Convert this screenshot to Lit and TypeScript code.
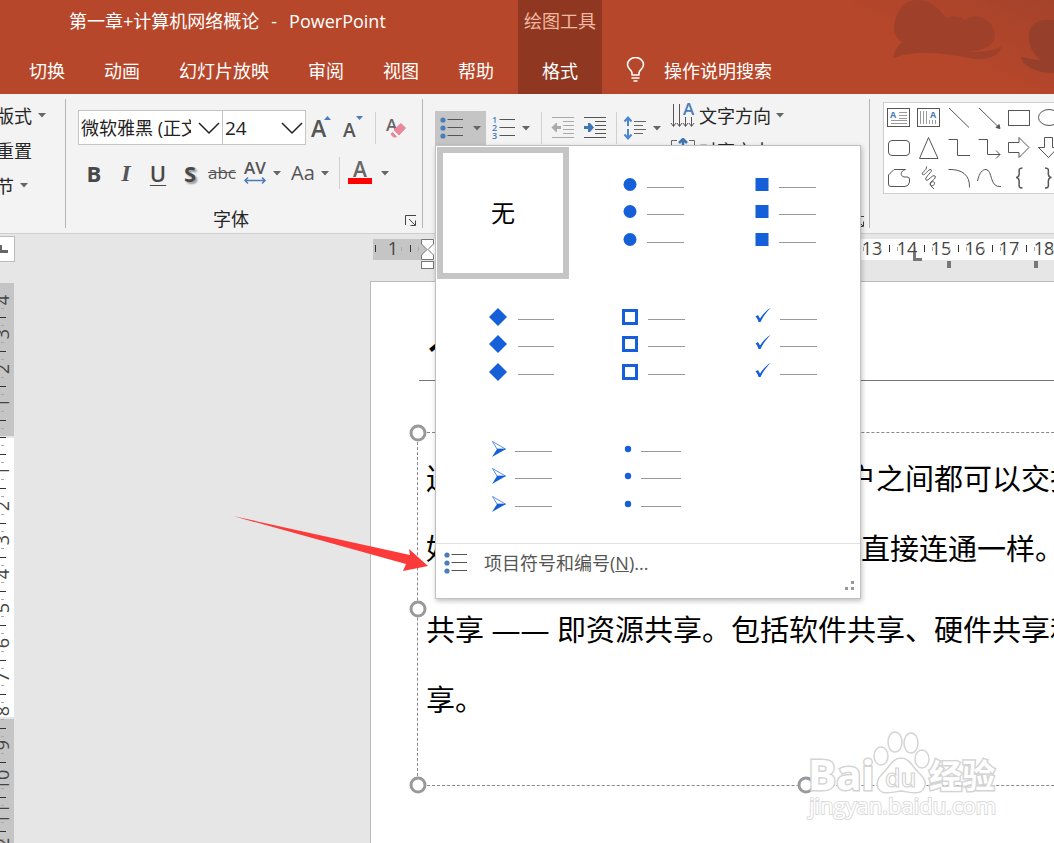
import { LitElement, html, svg, css } from "lit";
import { customElement, state } from "lit/decorators.js";

const caret = html`<svg class="caret" width="8" height="5" viewBox="0 0 8 5"><path d="M0 0H8L4 4.5Z" fill="#666"/></svg>`;
const chevron = html`<svg class="chevron" width="22" height="14" viewBox="0 0 22 14"><path d="M1 2L11 12L21 2" fill="none" stroke="#222" stroke-width="1.5"/></svg>`;
const launcher = html`<svg width="12" height="12" viewBox="0 0 12 12" fill="none" stroke="#444"><path d="M.5 10V.5H11M4 4L10 10M10.5 5.500V10.500H5.500"/></svg>`;

const listIcon = html`<svg width="24" height="24" viewBox="0 0 24 24">
  ${[4, 12, 20].map((y) => svg`<circle cx="3" cy=${y} r="2.6" fill="#4a7db8"/><path d=${`M7.500 ${y - 0.5}H23`} stroke="#555"/>`)}
</svg>`;

const numberIcon = html`<svg width="24" height="26" viewBox="0 0 24 26">
  ${[1, 2, 3].map((n) => svg`<text x="0" y=${n * 8} font-size="9" font-weight="600" fill="#4a7db8">${n}</text><path d=${`M7.500 ${n * 8 - 3.5}H23`} stroke="#555"/>`)}
</svg>`;

const indentIcon = (active: boolean) => html`<svg width="24" height="24" viewBox="0 0 24 24" fill="none" stroke=${active ? "#555" : "#aaa"}>
  <path d="M1 1.500H23M12 5.500H23M12 9.500H23M12 13.500H23M12 17.500H23M1 21.500H23"/>
  ${active
    ? svg`<path d="M1 10H5V7H7L11 11.500L7 16H5V13H1Z" fill="#3f76b5" stroke="none"/>`
    : svg`<path d="M10 10H6V7H5L0.500 11.500L5 16H6V13H10Z" fill="#aaa" stroke="none"/>`}
</svg>`;

const spacingIcon = html`<svg width="24" height="24" viewBox="0 0 24 24" fill="none">
  <path d="M5 2V10M1.500 5.500L5 1.500L8.500 5.500M5 13V22M1.500 18.500L5 22.500L8.500 18.500" stroke="#4a86cf" stroke-width="2"/>
  <path d="M11 5.500H23M11 9.500H20M11 13.500H23M11 17.500H20" stroke="#666"/>
</svg>`;

const directionIcon = html`<svg width="26" height="26" viewBox="0 0 26 26" fill="none" stroke="#555">
  <path d="M3.500 1V23M9.500 1V23M15.500 14V23M21.500 14V23"/>
  <path d="M1 20L3.500 23.500L6 20M7 20L9.500 23.500L12 20M13 20L15.500 23.500L18 20M19 20L21.500 23.500L24 20"/>
  <text x="13" y="12" font-size="17" font-weight="600" fill="#4a7db8" stroke="none">A</text>
</svg>`;

const alignIcon = html`<svg width="26" height="26" viewBox="0 0 26 26" fill="none">
  <path d="M7 2.500H1.500V23.500H24.500V2.500H19" stroke="#666"/>
  <path d="M13 1V10M9 5L13 1L17 5" stroke="#3f76b5" stroke-width="2.500"/>
  <path d="M6 14.500H20M6 18.500H20" stroke="#666"/>
</svg>`;

const shapes: [string, unknown][] = [
  ["文本框", svg`<rect x="3.500" y="5.500" width="22" height="18"/><path d="M15 9.500H23M15 12.500H23M15 15.500H23M7 17.500H23M7 20.500H23" stroke="#999"/><text x="6" y="15" font-size="9" font-weight="700" fill="#4a7db8" stroke="none">A</text>`],
  ["竖排文本框", svg`<rect x="3.500" y="5.500" width="22" height="18"/><path d="M6.500 8V21M9.500 8V21M12.500 8V21M15.500 17V21M18.500 17V21M21.500 17V21" stroke="#999"/><text x="16" y="15" font-size="9" font-weight="700" fill="#4a7db8" stroke="none">A</text>`],
  ["直线", svg`<path d="M5 5L25 24.500"/>`],
  ["箭头", svg`<path d="M5 5L25 24.500"/><path d="M26 25.500L22 24.500L25 21.500Z" fill="#555"/>`],
  ["矩形", svg`<rect x="4.500" y="7.500" width="21" height="15"/>`],
  ["椭圆", svg`<ellipse cx="15" cy="14.500" rx="10.500" ry="8"/>`],
  ["圆角矩形", svg`<rect x="4.500" y="7.500" width="21" height="15" rx="3.500"/>`],
  ["三角形", svg`<path d="M14.500 4.500L24 25.500H5.500Z"/>`],
  ["肘形连接符", svg`<path d="M4.500 6.500H13.500V22.500H26"/>`],
  ["肘形箭头", svg`<path d="M4.500 6.500H13.500V21.500H26M22 17.500L26 21.500L22 25.500"/>`],
  ["右箭头", svg`<path d="M4.500 9.500H15V4.500L25 14.500L15 24.500V19.500H4.500Z"/>`],
  ["下箭头", svg`<path d="M10.500 4.500H18.500V14.500H24L14.500 24.500L4.500 14.500H10.500Z"/>`],
  ["任意多边形", svg`<path d="M4.500 12L10 6.500H21.500C16 8 16 13 20 14H23Q25.500 14 25.500 16V19Q25 23 21 23.500H7Q4.500 23.500 4.500 21Z"/>`],
  ["自由曲线", svg`<path d="M12.500 3.500C13 8 7 9 8.500 11.500C11 13 14 6 17 6.500C20 8 10 14 12 17C14 19 18 11 21 13C23 16 16 18 16 21C17 24 21 23 20.500 19.500C18 17 15 21 17 23L20 26"/>`],
  ["弧形", svg`<path d="M4.500 6.500C18 6 26 12 25.500 24.500"/>`],
  ["曲线", svg`<path d="M3.500 18C5 10 9 6 12 6.500C19 7 15 25 27 23.500"/>`],
  ["左大括号", svg`<path d="M18.500 5C13 5 16 9 15 12Q14.500 14.500 12 14.500Q14.500 14.500 15 17C16 21 13 25 18.500 25" stroke-width="1.500"/>`],
  ["右大括号", svg`<path d="M11 5C16.500 5 13.500 9 14.500 12Q15 14.500 17.500 14.500Q15 14.500 14.500 17C13.500 21 16.500 25 11 25" stroke-width="1.500"/>`],
];

interface Bullet {
  name: string;
  glyph: unknown;
  from: number;
  to: number;
}

/* Each glyph is drawn around y = 0 and repeated on three rows. */
const bullets: Bullet[] = [
  { name: "实心圆", glyph: svg`<circle cx="61" cy="-.5" r="6.500"/>`, from: 78, to: 115 },
  { name: "实心方块", glyph: svg`<rect x="54.500" y="-7" width="13" height="13"/>`, from: 78, to: 115 },
  { name: "菱形", glyph: svg`<path d="M61 -9L70 0L61 9L52 0Z"/>`, from: 81, to: 117 },
  { name: "空心方块", glyph: svg`<path d="M53 -8H69V8H53ZM56 -5V5H66V-5Z" fill-rule="evenodd"/>`, from: 79, to: 116 },
  { name: "对勾", glyph: svg`<path d="M54.500 -.5L57 -2L59 1.500C62 -3 65 -6.500 69.500 -9C65 -4.500 61.500 .5 59.500 5H57.500C57 3 56 1 54.500 -.5Z"/>`, from: 79, to: 116 },
  { name: "箭头", glyph: svg`<path d="M55.500 -7.500L68.500 0H60Z" fill="none" stroke="#1560d8" stroke-width=".7"/><path d="M60 0H69L55 8Z"/>`, from: 78, to: 115 },
  { name: "圆点", glyph: svg`<circle cx="59" cy="0" r="3.200"/>`, from: 72, to: 112 },
];

/* One centimetre of the slide at the current zoom. */
const UNIT = 34.25;

@customElement("horizontal-ruler")
class HorizontalRuler extends LitElement {
  static styles = css`
    :host { display: block; height: 30px; overflow: hidden; }
    svg { display: block; width: 100%; height: 30px; font: 18px "Open Sans", sans-serif; }
  `;
  render() {
    const zero = 54;
    const marks = Array.from({ length: 35 }, (_, i) => i - 1);
    return html`<svg>
      <rect width="100%" height="21" fill="#fff"/>
      <rect width=${zero} height="21" fill="#c5c5c5"/>
      ${marks.map((n) => {
        const x = Math.round(zero + n * UNIT);
        return svg`
          ${n === 0 ? "" : svg`<text x=${x} y="16" text-anchor="middle" fill="#444">${Math.abs(n)}</text>`}
          <path d=${`M${x + 8.5} 8V12M${x + 25.5} 8V12`} stroke="#aaa"/>
          <path d=${`M${x + 17.5} 6V13`} stroke="#333"/>`;
      })}
      <path d="M2.500 6V13" stroke="#333"/>
      <g fill="#fff" stroke="#777">
        <path d="M48.500 .5H60.500V5L55 10.500L60.500 16V20.500H48.500V16L54 10.500L48.500 5Z"/>
        <rect x="48.500" y="22.500" width="12" height="7"/>
      </g>
      <g fill="#777"><path d="M540 13H543V19H549V22H540Z"/><rect x="574" y="22" width="4" height="7"/><rect x="661" y="22" width="4" height="7"/></g>
    </svg>`;
  }
}

@customElement("vertical-ruler")
class VerticalRuler extends LitElement {
  static styles = css`
    :host { display: block; overflow: hidden; }
    svg { display: block; width: 100%; height: 100%; font: 18px "Open Sans", sans-serif; }
  `;
  render() {
    const zero = 154;
    const marks = Array.from({ length: 20 }, (_, i) => i - 4);
    return html`<svg>
      <rect width="14" height="100%" fill="#c5c5c5"/>
      <rect y="153" width="14" height="283" fill="#e6e6e6"/>
      <rect y="155" width="14" height="279" fill="#fff"/>
      ${marks.map((n) => {
        const y = Math.round(zero + n * UNIT);
        return svg`
          ${n === 0 ? svg`<path d=${`M0 ${y + 0.5}H6`} stroke="#333"/>` : svg`<text transform=${`translate(9 ${y}) rotate(-90)`} text-anchor="middle" fill="#444">${Math.abs(n)}</text>`}
          <path d=${`M1 ${y + 8.5}H4M1 ${y + 25.5}H4`} stroke="#aaa"/>
          <path d=${`M0 ${y + 17.5}H6`} stroke="#333"/>`;
      })}
    </svg>`;
  }
}

@customElement("bullet-menu")
class BulletMenu extends LitElement {
  @state() private selected = "无";
  static styles = css`
    :host { display: block; box-sizing: border-box; background: #fff; border: 1px solid #c0c0c0; box-shadow: 1px 2px 5px rgba(0, 0, 0, 0.25); }
    .grid { display: grid; grid-template-columns: repeat(3, 132px); grid-auto-rows: 132px; padding: 1px 1px 0; }
    button { font: inherit; color: #000; background: none; border: 6px solid transparent; padding: 0; margin: 0; }
    .cell { font-size: 24px; }
    .cell[aria-checked="true"] { border-color: #c5c5c5; }
    .cell svg { display: block; margin: -6px; }
    .more { display: flex; align-items: center; gap: 16px; width: 100%; height: 38px; border: 0; border-top: 1px solid #e1e1e1; padding: 0 8px; font-size: 18px; color: #555; }
    .grip { display: flex; justify-content: flex-end; height: 17px; padding: 0 5px 0 0; }
  `;
  render() {
    return html`
      <div class="grid" role="menu">
        <button class="cell" role="menuitemradio" aria-checked=${String(this.selected === "无")} @click=${() => (this.selected = "无")}>无</button>
        ${bullets.map((b) => html`
          <button class="cell" role="menuitemradio" aria-label=${b.name} aria-checked=${String(this.selected === b.name)} @click=${() => (this.selected = b.name)}>
            <svg width="132" height="132" viewBox="0 0 132 132">
              ${[38, 65, 93].map((y) => svg`<g transform=${`translate(0 ${y})`} fill="#1560d8">${b.glyph}<path d=${`M${b.from} 2.5H${b.to}`} stroke="#999"/></g>`)}
            </svg>
          </button>`)}
      </div>
      <button class="more">${listIcon}<span>项目符号和编号(<u>N</u>)...</span></button>
      <div class="grip"><svg width="10" height="10" viewBox="0 0 10 10" fill="#999"><path d="M6 0H9V3H6ZM0 6H3V9H0ZM6 6H9V9H6Z"/></svg></div>
    `;
  }
}

@customElement("app-root")
class AppRoot extends LitElement {
  static styles = css`
    :host { display: flex; flex-direction: column; height: 100vh; overflow: hidden; position: relative; background: #e6e6e6; font-family: "Open Sans", "Noto Sans CJK SC", sans-serif; font-size: 18px; line-height: 24px; color: #262626; }
    button, select { font: inherit; color: inherit; background: none; border: 0; padding: 0; margin: 0; }
    svg { flex: none; }

    .header { display: flex; flex: none; height: 94px; background: #b7472a; color: #fff; position: relative; white-space: nowrap; }
    .art { position: absolute; right: 0; top: 0; }
    .lead { display: flex; flex: none; flex-direction: column; justify-content: space-between; padding: 9px 24px 11px 29px; }
    .title { display: flex; gap: 12px; padding-left: 40px; }
    .tabs { display: flex; gap: 39px; }
    .context { display: flex; flex: none; flex-direction: column; justify-content: space-between; align-items: center; background: #8f3721; padding: 9px 6px 11px; }
    .context-name { color: #f1b8a0; }
    .tell { display: flex; align-items: flex-end; padding: 0 0 11px 24px; gap: 19px; position: relative; }

    .ribbon { display: flex; flex: none; height: 139px; background: #f3f3f3; border-bottom: 1px solid #cfcfcf; position: relative; z-index: 2; white-space: nowrap; }
    .group { display: flex; flex: none; box-sizing: border-box; position: relative; }
    .group::after { content: ""; position: absolute; right: 0; top: 5px; bottom: 5px; border-right: 1px solid #b5b5b5; }
    .slides { flex-direction: column; width: 70px; margin-left: -4px; padding-top: 4px; align-items: flex-start; }
    .slides button { height: 35px; display: flex; align-items: center; gap: 6px; }
    .font { flex-direction: column; width: 357px; padding: 16px 5px 0 12px; }
    .row { display: flex; align-items: center; height: 35px; }
    .row + .row { margin-top: 10px; height: 36px; }
    .box { position: relative; display: flex; }
    .box select { appearance: none; box-sizing: border-box; height: 35px; width: 100%; border: 1px solid #c5c5c5; background: #fff; color: #222; padding: 0 31px 0 2px; text-overflow: clip; overflow: hidden; border-radius: 0; }
    .face { width: 145px; }
    .size { width: 84px; margin-left: -1px; }
    .size select { font-size: 19px; }
    .chevron { position: absolute; right: 3px; top: 11px; pointer-events: none; }
    .tool { display: flex; flex: none; align-items: center; justify-content: center; width: 32px; height: 34px; color: #555; }
    .split { width: 48px; gap: 6px; }
    .color { gap: 9px; }
    .rule { flex: none; width: 1px; height: 32px; background: #d0d0d0; margin: 0 5px; }
    .row .rule { margin: 0 4px 0 5px; }
    .bold { font-size: 22px; font-weight: 700; color: #484848; }
    .italic { font-family: "Liberation Serif", serif; font-style: italic; font-weight: 700; font-size: 24px; }
    .shadow { text-shadow: 2px 2px 2px #999; }
    .under { text-decoration: underline; text-decoration-thickness: 1px; text-underline-offset: 3px; font-weight: 600; }
    .case { font-size: 20px; }
    .strike { text-decoration: line-through; font-size: 17px; }
    .foot { display: flex; align-items: center; justify-content: center; margin-top: 16px; padding-right: 34px; position: relative; }
    .launch { position: absolute; right: 1px; top: 8px; display: flex; }
    .para { width: 447px; padding-left: 12px; }
    .strip { display: flex; align-items: center; height: 34px; margin-top: 17px; }
    .drop { position: relative; }
    .drop > .tool { width: 51px; gap: 9px; background: #c5c5c5; }
    bullet-menu { position: absolute; left: 0; top: 34px; width: 426px; z-index: 5; }
    .number { width: 50px; }
    .strip .rule + .split { width: 40px; }
    .text-col { display: flex; flex-direction: column; padding: 4px 0 0 8px; }
    .text-col button { display: flex; align-items: center; gap: 3px; height: 35px; }
    .text-col .caret { margin-left: 2px; }
    .para > .launch { right: 5px; top: 122px; }
    .gallery { display: grid; flex: none; grid-template-columns: repeat(6, 30px); grid-auto-rows: 30px; align-self: flex-start; margin: 8px 0 0 13px; border: 1px solid #cfcfcf; background: #fff; }
    .gallery svg { display: block; }

    .rulers { display: flex; flex: none; height: 47px; }
    .corner { width: 15px; height: 26px; margin-top: 2px; box-sizing: border-box; background: #fff; border: 1px solid #bbb; border-left: 0; display: flex; align-items: center; }
    horizontal-ruler { flex: 1; margin: 5px 0 0 358px; }
    .work { display: flex; flex: 1; min-height: 0; }
    vertical-ruler { width: 14px; margin-top: 2px; }
    .slide { flex: 1; margin-left: 356px; background: #fff; border: 1px solid #bbb; border-width: 1px 0 0 1px; position: relative; overflow: hidden; color: #000; }
    .heading { box-sizing: border-box; height: 99px; margin: 0 0 0 48px; padding: 48px 0 0 8px; border-bottom: 1px solid #777; font-size: 36px; line-height: 50px; font-weight: 700; }
    .body { box-sizing: border-box; position: relative; width: 777px; height: 354px; margin: 51px 0 0 46px; border: 1px dashed #888; padding: 11px 8px; font-size: 29px; line-height: 70px; white-space: nowrap; }
    .body p { margin: 0 0 11px; }
    .handle { position: absolute; box-sizing: border-box; width: 17px; height: 17px; border: 3px solid #999; border-radius: 50%; background: #fff; transform: translate(-50%, -50%); }
    .tl { left: 0; top: 0; }
    .ml { left: 0; top: 50%; }
    .bl { left: 0; top: 100%; }
    .tm { left: 50%; top: 0; }
    .bm { left: 50%; top: 100%; }
    .mark { position: absolute; left: 435px; top: 446px; }
    .pointer { position: absolute; left: 230px; top: 510px; z-index: 3; pointer-events: none; }
  `;

  render() {
    return html`
      <header class="header">
        <svg class="art" width="200" height="94" viewBox="854 0 200 94">
          <defs><linearGradient id="fade" x1="0" y1="1" x2="1" y2="0"><stop offset=".4" stop-color="#b7472a"/><stop offset="1" stop-color="#a4432b"/></linearGradient></defs>
          <rect x="854" width="200" height="94" fill="url(#fade)"/>
          <path fill="#9f412a" d="M894 28C895 10 905 0 918 0C932 0 942 12 946 18C955 14 962 18 965 20C975 12 990 18 994 30C998 45 985 50 970 52C985 52 995 50 1002 46C1000 55 990 60 975 59C950 55 920 48 894 58C893 52 898 46 902 42C896 38 894 34 894 28Z"/>
          <path fill="#96402b" d="M1054 20C1038 18 1028 24 1029 38C1029 48 1034 54 1040 60C1032 60 1025 57 1021 57C1022 65 1035 73 1054 73Z"/>
        </svg>
        <div class="lead">
          <div class="title"><span>第一章+计算机网络概论</span><span>-</span><span>PowerPoint</span></div>
          <nav class="tabs">${["切换", "动画", "幻灯片放映", "审阅", "视图", "帮助"].map((t) => html`<button>${t}</button>`)}</nav>
        </div>
        <div class="context"><span class="context-name">绘图工具</span><button>格式</button></div>
        <button class="tell">
          <svg width="19" height="26" viewBox="0 0 19 26" fill="none" stroke="#fff" stroke-width="1.600"><path d="M6 18V16C6 13 1.500 12 1.500 7.500A8 7 0 0 1 17.500 7.500C17.500 12 13 13 13 16V18M5.500 18H13.500M5.500 21H13.500M7.500 24H11.500"/></svg>
          <span>操作说明搜索</span>
        </button>
      </header>

      <section class="ribbon">
        <div class="group slides"><button>版式 ${caret}</button><button>重置</button><button>节 ${caret}</button></div>

        <div class="group font">
          <div class="row">
            <label class="box face"><select aria-label="字体"><option>微软雅黑 (正文)</option></select>${chevron}</label>
            <label class="box size"><select aria-label="字号"><option>24</option></select>${chevron}</label>
            <button class="tool" aria-label="增大字号"><svg width="24" height="26" viewBox="0 0 24 26"><text x="1" y="22" font-size="23" font-weight="600" fill="#555">A</text><path d="M14 5L17.500 1L21 5Z" fill="#4a7db8"/></svg></button>
            <button class="tool" aria-label="减小字号"><svg width="24" height="26" viewBox="0 0 24 26"><text x="1" y="22" font-size="19" font-weight="600" fill="#555">A</text><path d="M14 1H21L17.500 5Z" fill="#4a7db8"/></svg></button>
            <span class="rule"></span>
            <button class="tool" aria-label="清除格式"><svg width="24" height="26" viewBox="0 0 24 26"><text x="2" y="16" font-size="17" font-weight="600" fill="#666">A</text><path d="M17 8.500L21.500 13L15 20L10 15Z" fill="#e8889a" stroke="#e8889a"/><path d="M8.500 16.500L13.500 21.500L11.500 23H9.500L6.500 20V18.500Z" fill="#e8889a" stroke="#f3f3f3"/></svg></button>
          </div>
          <div class="row">
            <button class="tool bold">B</button>
            <button class="tool italic">I</button>
            <button class="tool bold under">U</button>
            <button class="tool bold shadow">S</button>
            <button class="tool strike">abc</button>
            <button class="tool split" aria-label="字符间距"><svg width="24" height="26" viewBox="0 0 24 26"><text x="1" y="14" font-size="17" font-weight="600" fill="#555">AV</text><path d="M2 20.500H22M5 17.500L2 20.500L5 23.500M19 17.500L22 20.500L19 23.500" fill="none" stroke="#4a7db8" stroke-width="1.500"/></svg>${caret}</button>
            <button class="tool split case">Aa${caret}</button>
            <span class="rule"></span>
            <button class="tool split color" aria-label="字体颜色"><svg width="24" height="26" viewBox="0 0 24 26"><text x="5" y="17" font-size="21" font-weight="600" fill="#666">A</text><rect y="18" width="24" height="6" fill="#f00"/></svg>${caret}</button>
          </div>
          <div class="foot"><span>字体</span><button class="launch" aria-label="字体设置">${launcher}</button></div>
        </div>

        <div class="group para">
          <div class="strip">
            <div class="drop">
              <button class="tool" aria-label="项目符号" aria-expanded="true">${listIcon}${caret}</button>
              <bullet-menu></bullet-menu>
            </div>
            <button class="tool split number" aria-label="编号">${numberIcon}${caret}</button>
            <span class="rule"></span>
            <button class="tool" aria-label="降低列表级别">${indentIcon(false)}</button>
            <button class="tool" aria-label="提高列表级别">${indentIcon(true)}</button>
            <span class="rule"></span>
            <button class="tool split" aria-label="行距">${spacingIcon}${caret}</button>
          </div>
          <div class="text-col">
            <button>${directionIcon}<span>文字方向</span>${caret}</button>
            <button>${alignIcon}<span>对齐文本</span>${caret}</button>
          </div>
          <button class="launch" aria-label="段落设置">${launcher}</button>
        </div>

        <div class="gallery">
          ${shapes.map(([name, art]) => html`<button aria-label=${name}><svg width="30" height="30" viewBox="0 0 30 30" fill="none" stroke="#555">${art}</svg></button>`)}
        </div>
      </section>

      <div class="rulers">
        <button class="corner" aria-label="制表符"><svg width="8" height="8" viewBox="0 0 8 8"><path d="M0 0H2V5H8V8H0Z" fill="#666"/></svg></button>
        <horizontal-ruler></horizontal-ruler>
      </div>

      <main class="work">
        <vertical-ruler></vertical-ruler>
        <article class="slide">
          <div class="heading">1.1</div>
          <div class="body">
            <p>连通性 —— 计算机网络使上网用户之间都可以交换信息，<br>好像这些用户的计算机都可以彼此直接连通一样。</p>
            <p>共享 —— 即资源共享。包括软件共享、硬件共享和数据共<br>享。</p>
            ${["tl", "ml", "bl", "tm", "bm"].map((c) => html`<span class="handle ${c}"></span>`)}
          </div>
          <svg class="mark" width="200" height="96" viewBox="0 0 200 96" fill="#fff" stroke="#d4d4d4" stroke-width="1.500">
            <g paint-order="stroke" stroke-width="3" font-weight="700">
              <text x="2" y="62" font-size="42">Bai</text>
              <text x="123" y="60" font-size="33">经验</text>
            </g>
            <ellipse cx="75" cy="28" rx="7" ry="9"/><ellipse cx="89" cy="14" rx="7" ry="10"/><ellipse cx="105" cy="15" rx="7" ry="10"/><ellipse cx="116" cy="31" rx="7" ry="9"/>
            <path d="M95 30C103 30 106 38 112 44C119 50 121 55 118 60C114 68 104 64 95 63C86 64 76 68 72 60C70 54 72 50 78 44C84 38 87 30 95 30Z"/>
            <text x="79" y="59" font-size="25" font-weight="600" stroke-width="1.200">du</text>
            <text x="3" y="86" font-size="22" paint-order="stroke" stroke="#dcdcdc" stroke-width="2">jingyan.baidu.com</text>
          </svg>
        </article>
      </main>

      <svg class="pointer" width="200" height="64" viewBox="230 510 200 64"><path d="M233 516L410 555L409 549L428 566L403 571L406 564Z" fill="#fd3a3a"/></svg>
    `;
  }
}
